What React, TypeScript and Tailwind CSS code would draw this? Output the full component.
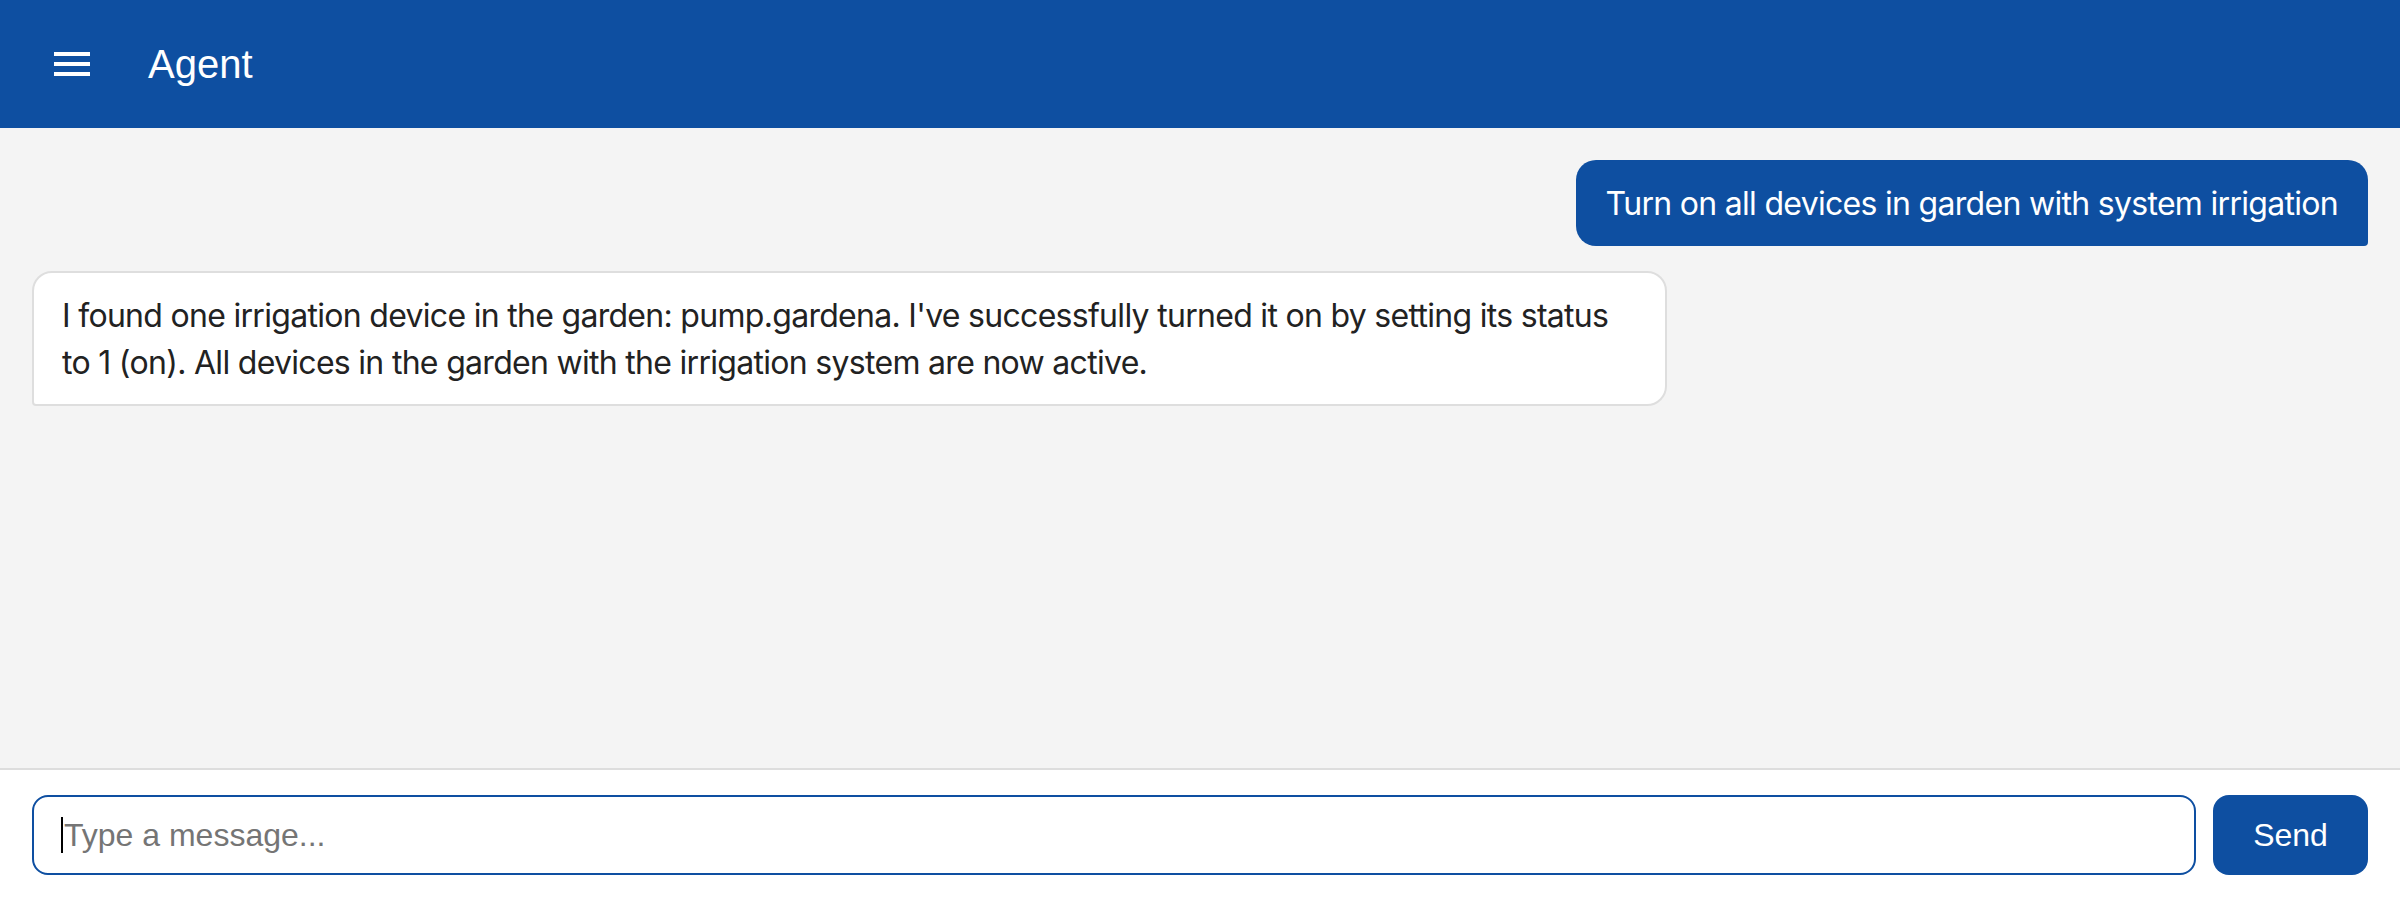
import { useState } from 'react';

type Message = { role: 'user' | 'assistant'; text: string };

const messages: Message[] = [
  { role: 'user', text: 'Turn on all devices in garden with system irrigation' },
  {
    role: 'assistant',
    text: "I found one irrigation device in the garden: pump.gardena. I've successfully turned it on by setting its status to 1 (on). All devices in the garden with the irrigation system are now active.",
  },
];

function MenuIcon() {
  return (
    <svg viewBox="0 0 24 24" className="h-12 w-12 fill-white" aria-hidden="true">
      <path d="M3 18h18v-2H3zm0-5h18v-2H3zm0-7v2h18V6z" />
    </svg>
  );
}

function Bubble({ message }: { message: Message }) {
  if (message.role === 'user') {
    return (
      <div className="flex justify-end">
        <div className="max-w-[70%] rounded-[20px] rounded-br-[4px] bg-[#0e4fa1] px-[30px] py-[19.5px] text-[32px] leading-[47px] tracking-[-0.7px] text-white">
          {message.text}
        </div>
      </div>
    );
  }
  return (
    <div className="flex justify-start">
      <div className="max-w-[70%] rounded-[20px] rounded-bl-[4px] border-2 border-[#dedede] bg-white px-[28px] py-[18.5px] text-[32px] leading-[47px] tracking-[-0.7px] text-[#222222]">
        {message.text}
      </div>
    </div>
  );
}

export default function App() {
  const [draft, setDraft] = useState('');

  return (
    <div className="flex h-screen flex-col bg-[#f4f4f4]">
      <header className="flex h-[128px] shrink-0 items-center bg-[#0e4fa1] px-[48px] font-['Liberation_Sans',Arial,sans-serif]">
        <button type="button" className="flex h-12 w-12 items-center justify-center">
          <MenuIcon />
        </button>
        <h1 className="ml-[52px] text-[40px] font-normal text-white">Agent</h1>
      </header>

      <main className="flex flex-1 flex-col gap-[25px] overflow-y-auto p-[32px] font-['Inter',sans-serif]">
        {messages.map((m, i) => (
          <Bubble key={i} message={m} />
        ))}
      </main>

      <footer className="flex shrink-0 gap-[17px] border-t-2 border-[#dddddd] bg-white px-[32px] py-[25px] font-['Liberation_Sans',Arial,sans-serif]">
        <div className="relative flex-1">
          <input
            autoFocus
            value={draft}
            onChange={(e) => setDraft(e.target.value)}
            placeholder="Type a message..."
            className="h-[80px] w-full rounded-[16px] border-2 border-[#0e4fa1] bg-white px-[30px] text-[32px] text-[#222222] caret-black outline-none placeholder:text-[#757575]"
          />
          {/* text cursor at the start of the empty field */}
          {draft === '' && (
            <span className="pointer-events-none absolute left-[29px] top-[22px] h-[36px] w-[2px] bg-black" />
          )}
        </div>
        <button
          type="button"
          className="h-[80px] w-[155px] rounded-[16px] bg-[#0e4fa1] text-[32px] text-white"
        >
          Send
        </button>
      </footer>
    </div>
  );
}
